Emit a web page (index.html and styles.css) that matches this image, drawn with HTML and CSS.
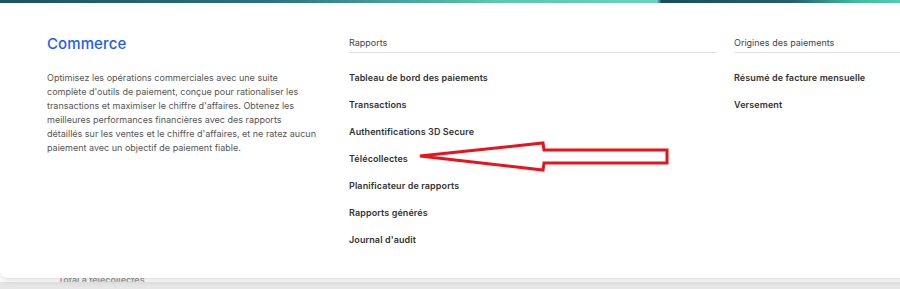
FILE: index.html
```html
<!DOCTYPE html>
<html lang="fr">
<head>
    <meta charset="UTF-8">
    <meta name="viewport" content="width=device-width, initial-scale=1.0">
    <link rel="stylesheet" href="styles.css">
</head>
<body>
    <div id="topbar"></div>
    <div class="page">
        <p class="behind">Total à télécollectes</p>
    </div>

    <div class="menu">
        <div class="intro">
            <h2 class="title">Commerce</h2>
            <p class="desc">Optimisez les opérations commerciales avec une suite complète d'outils de paiement, conçue pour rationaliser les transactions et maximiser le chiffre d'affaires. Obtenez les meilleures performances financières avec des rapports détaillés sur les ventes et le chiffre d'affaires, et ne ratez aucun paiement avec un objectif de paiement fiable.</p>
        </div>
        <div class="group reports">
            <div class="group-head">Rapports</div>
            <ul class="links">
                <li>Tableau de bord des paiements</li>
                <li>Transactions</li>
                <li>Authentifications 3D Secure</li>
                <li class="marked">Télécollectes
                    <svg class="arrow" width="260" height="34" viewBox="0 0 260 34">
                        <polygon points="2,16 125,3 126,10 249,10 249,23 126,23 125,30" fill="none" stroke="#e8131b" stroke-width="3" stroke-linejoin="miter"/>
                    </svg>
                </li>
                <li>Planificateur de rapports</li>
                <li>Rapports générés</li>
                <li>Journal d'audit</li>
            </ul>
        </div>
        <div class="group origins">
            <div class="group-head">Origines des paiements</div>
            <ul class="links">
                <li>Résumé de facture mensuelle</li>
                <li>Versement</li>
            </ul>
        </div>
    </div>
</body>
</html>
```

FILE: styles.css
```css
html, body {
    margin: 0;
    padding: 0;
}
body {
    background-color: #e6e6e6;
    font-family: Inter, "Noto Sans", sans-serif;
    width: 900px;
    height: 289px;
    overflow: hidden;
    position: relative;
}
#topbar {
    height: 3px;
    background: linear-gradient(to right, #1c5461 0%, #2a7480 30%, #5cc9b0 55%, #6ad6bb 73%, #1c4f5e 73.5%, #25606c 88%, #3fbfa2 95%, #4fd0b0 100%);
}
.page {
    height: 279px;
    overflow: hidden;
    background-color: #ffffff;
    padding: 0 0 0 58px;
    box-sizing: border-box;
}
.behind {
    margin: 0;
    padding-top: 271px;
    font-size: 9px;
    font-weight: 600;
    color: #999;
}
/* mega menu dropped over the page */
.menu {
    position: absolute;
    top: 3px;
    left: 0;
    right: -30px;
    height: 275px;
    background-color: #ffffff;
    border-radius: 0 0 8px 8px;
    box-shadow: 0 3px 6px rgba(0, 0, 0, 0.12);
    display: flex;
    padding-left: 47px;
    box-sizing: border-box;
}
.intro {
    width: 272px;
    margin-right: 30px;
}
.title {
    margin: 31px 0 0;
    font-size: 15px;
    font-weight: 500;
    color: #1f5bf5;
    letter-spacing: 0.1px;
}
.desc {
    margin: 18px 0 0;
    font-size: 9px;
    line-height: 14px;
    color: #555;
}
.group-head {
    margin-top: 34px;
    padding-bottom: 4px;
    border-bottom: 1px solid #e2e2e2;
    font-size: 9px;
    color: #444;
}
.reports {
    width: 368px;
    margin-right: 17px;
}
.origins {
    flex: 1;
}
.links {
    list-style: none;
    margin: 19px 0 0;
    padding: 0;
}
.links li {
    height: 27px;
    font-size: 9px;
    font-weight: 600;
    color: #333;
    letter-spacing: 0.1px;
}
.marked {
    position: relative;
}
.arrow {
    position: absolute;
    left: 69px;
    top: -13px;
}
```
